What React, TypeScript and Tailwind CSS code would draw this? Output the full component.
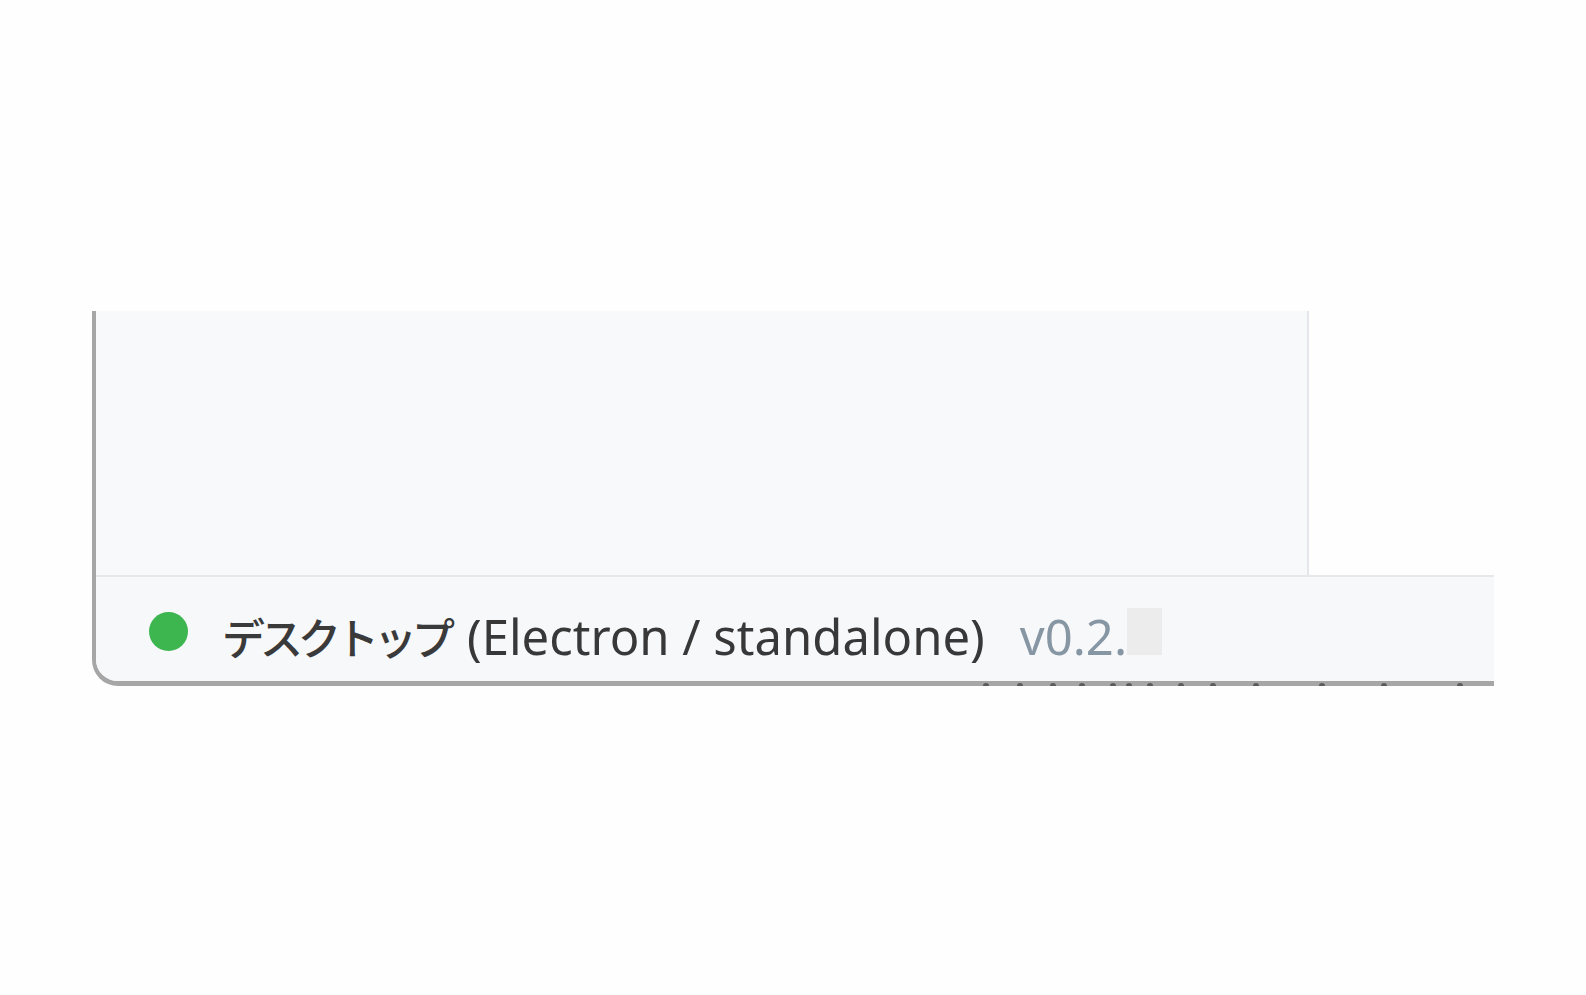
import React from 'react';

// tops of the next row's glyphs, cut off by the bottom edge
const marks = [983, 1017, 1050, 1079, 1110, 1126, 1147, 1178, 1210, 1253, 1319, 1381, 1457];

const App: React.FC = () => {
  return (
    <div className="min-h-[995px] w-full bg-[#fefefe] pt-[311px] pl-[92px]">
      <div className="relative w-[1402px] h-[375px] flex flex-col border-l-4 border-b-[5px] border-[#a6a6a6] rounded-bl-[26px]">
        <div className="flex h-[264px]">
          <div className="w-[1213px] bg-[#f8f9fb] border-r-2 border-[#e4e6ea]" />
          <div className="flex-1 bg-[#fefefe]" />
        </div>
        <footer
          className="flex-1 bg-[#f7f8fa] border-t-2 border-[#e6e8ec] rounded-bl-[22px] flex items-center pl-[53px] pt-[4px]"
          style={{ fontFamily: '"Noto Sans", "Noto Sans CJK JP", sans-serif' }}
        >
          <span className="w-[39px] h-[39px] rounded-full bg-[#3db650] shrink-0" />
          <div className="ml-[34px] mt-[7px] flex items-baseline leading-none">
            <span
              className="text-[43px] tracking-[-5px] font-medium text-[#3a3a3a]"
              style={{ fontFamily: '"Noto Sans CJK JP", sans-serif' }}
            >
              デスクトップ
            </span>
            <span className="ml-[17px] text-[49px] text-[#383838]">(Electron / standalone)</span>
            <span className="ml-[35px] text-[49px] text-[#8796a3]">v0.2.</span>
            <span className="inline-block w-[35px] h-[47px] -mb-[3px] bg-[#ececec]" />
          </div>
        </footer>
        <div className="absolute left-0 right-0 bottom-[-5px] h-[5px] flex">
          {marks.map((x, i) => (
            <span
              key={i}
              className="h-[3px] w-[6px] mt-[2px] bg-[#3c3c3c] opacity-70 rounded-t-sm shrink-0"
              style={{ marginLeft: i === 0 ? x - 96 : x - marks[i - 1] - 6 }}
            />
          ))}
        </div>
      </div>
    </div>
  );
};

export default App;
